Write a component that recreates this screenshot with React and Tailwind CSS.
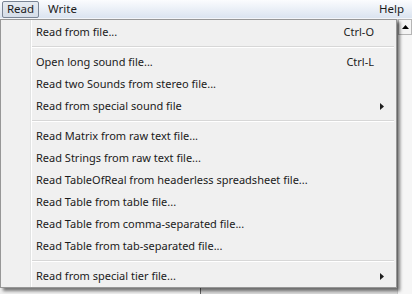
import React from 'react';

const font = { fontFamily: '"Noto Sans", "Open Sans", Arial, sans-serif' };

const groups = [
    [{ label: 'Read from file...', shortcut: 'Ctrl-O' }],
    [
        { label: 'Open long sound file...', shortcut: 'Ctrl-L' },
        { label: 'Read two Sounds from stereo file...' },
        { label: 'Read from special sound file', sub: true },
    ],
    [
        { label: 'Read Matrix from raw text file...' },
        { label: 'Read Strings from raw text file...' },
        { label: 'Read TableOfReal from headerless spreadsheet file...' },
        { label: 'Read Table from table file...' },
        { label: 'Read Table from comma-separated file...' },
        { label: 'Read Table from tab-separated file...' },
    ],
    [{ label: 'Read from special tier file...', sub: true }],
];

const SubArrow = () => (
    <svg width="4" height="7" viewBox="0 0 4 7" className="absolute right-[12px] top-[8px]">
        <path d="M0 0 L4 3.5 L0 7 Z" fill="#1e1e1e" />
    </svg>
);

const MenuItem = ({ label, shortcut, sub }) => (
    <div className="relative flex items-center h-[22px] pl-[35px] pr-[20px] text-[11px] text-[#1b1b1b]">
        <span className="flex-1 whitespace-nowrap">{label}</span>
        {shortcut && <span className="whitespace-nowrap mr-[2px]">{shortcut}</span>}
        {sub && <SubArrow />}
    </div>
);

const Separator = () => (
    <div className="h-[8px] flex flex-col justify-center pl-[31px] pr-[2px]">
        <div className="h-px bg-[#d7d7d7]" />
        <div className="h-px bg-white" />
    </div>
);

const App = () => {
    return (
        <div className="relative w-[412px] h-[294px] overflow-hidden bg-[#f0f0f0]" style={font}>
            {/* Menu bar */}
            <div className="flex items-center h-[19px] bg-gradient-to-b from-[#fbfcfe] to-[#dbe4f0] border-b border-[#f4f6fa] text-[11.5px] text-[#1b1b1b]">
                <div className="ml-[2px] h-[17px] w-[37px] flex items-center justify-center rounded-[2px] border border-[#7a8595] bg-gradient-to-b from-[#e6ebf1] to-[#d5dde8]">
                    Read
                </div>
                <div className="ml-[9px]">Write</div>
                <div className="ml-auto mr-[8px]">Help</div>
            </div>

            {/* Window content below the menu */}
            <div className="flex h-[275px]">
                <div className="flex-1 flex flex-col">
                    <div className="flex-1" />
                    <div className="flex h-[6px]">
                        <div className="w-[200px] bg-[#f0f0f0]" />
                        <div className="w-px bg-[#646464]" />
                        <div className="flex-1 bg-[#d9d9d9]" />
                    </div>
                </div>
                {/* Scrollbar */}
                <div className="w-[15px] flex flex-col bg-[#f6f6f6] border-l border-[#c8c8c8]">
                    <div className="h-[16px] flex items-center justify-center border border-[#b5b5b5] bg-[#f4f4f4]">
                        <svg width="7" height="4" viewBox="0 0 7 4">
                            <path d="M3.5 0 L7 4 L0 4 Z" fill="#000" />
                        </svg>
                    </div>
                </div>
            </div>

            {/* Dropdown menu */}
            <div className="absolute left-0 top-[19px] w-[397px] border border-[#979797] bg-[#f0f0f0] pt-[1px] shadow-[3px_3px_3px_rgba(0,0,0,0.5)]">
                <div className="absolute left-[29px] top-0 bottom-0 w-px bg-[#e2e3e3]" />
                <div className="absolute left-[30px] top-0 bottom-0 w-px bg-white" />
                {groups.map((group, gi) => (
                    <React.Fragment key={gi}>
                        {gi > 0 && <Separator />}
                        {group.map((item) => (
                            <MenuItem key={item.label} {...item} />
                        ))}
                    </React.Fragment>
                ))}
            </div>
        </div>
    );
};

export default App;
